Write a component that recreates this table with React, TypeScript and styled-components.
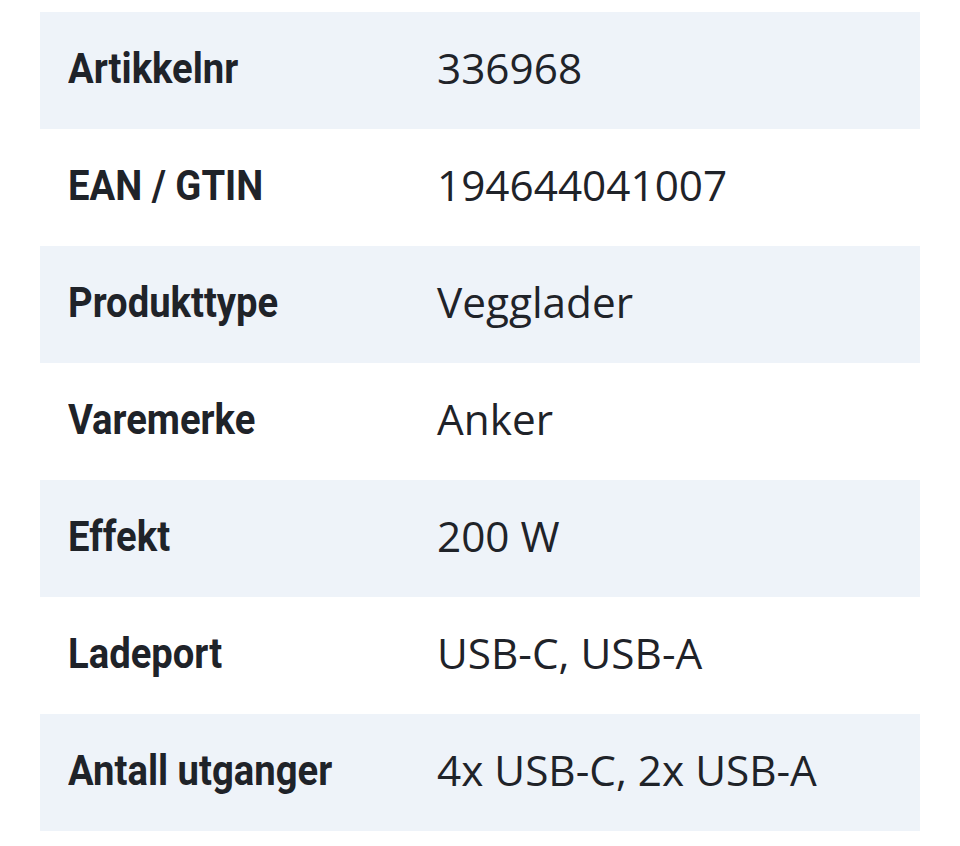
import React from "react";
import styled, { createGlobalStyle } from "styled-components";

const Global = createGlobalStyle`
  html, body { margin: 0; padding: 0; background: #ffffff; }
`;

const Page = styled.div`
  padding: 12px 40px 0;
`;

const Table = styled.div`
  display: flex;
  flex-direction: column;
`;

const Row = styled.div<{ $shaded: boolean }>`
  display: grid;
  grid-template-columns: 369px 1fr;
  align-items: center;
  height: 117px;
  background: ${(p) => (p.$shaded ? "#eef3f9" : "#ffffff")};
`;

const Label = styled.div`
  margin: 0 0 4px 28px;
  font-family: Roboto, "Liberation Sans", sans-serif;
  font-weight: 700;
  font-size: 42px;
  color: #1f2329;
  white-space: nowrap;
  transform: scaleX(0.91);
  transform-origin: left center;
`;

const Value = styled.div`
  padding-left: 28px;
  margin-bottom: 6px;
  font-family: "Open Sans", "Noto Sans", sans-serif;
  font-weight: 400;
  font-size: 42.3px;
  color: #1f2329;
  white-space: nowrap;
`;

const rows: [string, string][] = [
  ["Artikkelnr", "336968"],
  ["EAN / GTIN", "194644041007"],
  ["Produkttype", "Vegglader"],
  ["Varemerke", "Anker"],
  ["Effekt", "200 W"],
  ["Ladeport", "USB-C, USB-A"],
  ["Antall utganger", "4x USB-C, 2x USB-A"],
];

export default function App() {
  return (
    <>
      <Global />
      <Page>
        <Table>
          {rows.map(([k, v], i) => (
            <Row key={k} $shaded={i % 2 === 0}>
              <Label>{k}</Label>
              <Value>{v}</Value>
            </Row>
          ))}
        </Table>
      </Page>
    </>
  );
}
